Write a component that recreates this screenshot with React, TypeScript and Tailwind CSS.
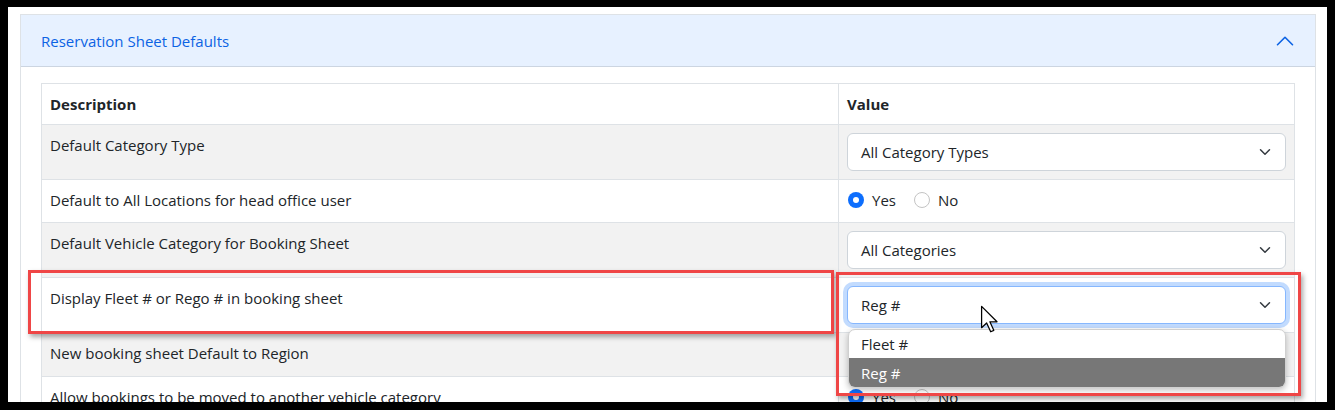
import { clsx } from 'clsx'

type Row = {
  label: string
  h: string
  striped: boolean
  kind: 'select' | 'radio' | 'hidden'
  value?: string
  yes?: boolean
  focus?: boolean
}

const rows: Row[] = [
  { label: 'Default Category Type', h: 'h-[55px]', striped: true, kind: 'select', value: 'All Category Types' },
  { label: 'Default to All Locations for head office user', h: 'h-[43px]', striped: false, kind: 'radio', yes: true },
  { label: 'Default Vehicle Category for Booking Sheet', h: 'h-[55px]', striped: true, kind: 'select', value: 'All Categories' },
  { label: 'Display Fleet # or Rego # in booking sheet', h: 'h-[55px]', striped: false, kind: 'select', value: 'Reg #', focus: true },
  // value cell sits under the open list, nothing of it shows
  { label: 'New booking sheet Default to Region', h: 'h-[44px]', striped: true, kind: 'hidden' },
  { label: 'Allow bookings to be moved to another vehicle category', h: 'h-[43px]', striped: false, kind: 'radio', yes: true },
]

function SelectBox({ value, focus }: { value: string; focus?: boolean }) {
  return (
    <div
      className={clsx(
        'flex h-[38px] items-center justify-between rounded-[6px] border bg-white pl-[13px] pr-[14px]',
        focus ? 'border-[#86b7fe] shadow-[0_0_0_4px_rgba(13,110,253,0.25)]' : 'border-[#ced4da]'
      )}
    >
      <span>{value}</span>
      <svg width="12" height="12" viewBox="0 0 16 16" fill="none">
        <path d="m2 5 6 6 6-6" stroke="#343a40" strokeWidth="2" strokeLinecap="round" strokeLinejoin="round" />
      </svg>
    </div>
  )
}

function Radio({ checked, label }: { checked: boolean; label: string }) {
  return (
    <label className="flex items-center gap-[8px]">
      {checked ? (
        <span className="flex h-4 w-4 items-center justify-center rounded-full bg-[#0d6efd]">
          <span className="h-[6px] w-[6px] rounded-full bg-white" />
        </span>
      ) : (
        <span className="h-4 w-4 rounded-full border border-[#c4c4c4] bg-white" />
      )}
      {label}
    </label>
  )
}

export default function App() {
  return (
    <div className="relative flex h-[410px] w-[1335px] flex-col overflow-hidden bg-black px-[8px] pt-[7px] pb-[8px] font-['Open_Sans',sans-serif] text-[15px] leading-6 text-[#212529]">
      {/* page */}
      <div className="flex-1 overflow-hidden bg-white pt-[7px] pl-[12px] pr-[11px]">
        <div className="border border-[#dee2e6]">
          {/* accordion header */}
          <div className="flex h-[52px] items-center justify-between border-b border-[#ccd5e1] bg-[#e7f1ff] px-5 text-[#0c63e4]">
            <span>Reservation Sheet Defaults</span>
            <svg width="20" height="20" viewBox="0 0 16 16" fill="none">
              <path d="M2 11 8 5l6 6" stroke="#0c63e4" strokeWidth="1.3" strokeLinecap="round" strokeLinejoin="round" />
            </svg>
          </div>

          {/* body */}
          <div className="px-5 pt-4">
            <div className="border-x border-[#dee2e6]">
              <div className="flex h-[41px] border-t border-[#dee2e6] bg-white font-bold">
                <div className="w-[796px] px-2 pt-2">Description</div>
                <div className="flex-1 border-l border-[#dee2e6] px-2 pt-2">Value</div>
              </div>
              {rows.map((row) => (
                <div
                  key={row.label}
                  className={clsx('flex border-t border-[#dee2e6]', row.h, row.striped ? 'bg-[#f2f2f2]' : 'bg-white')}
                >
                  <div className="w-[796px] px-2 pt-2 whitespace-nowrap">{row.label}</div>
                  <div className="flex-1 border-l border-[#dee2e6] px-2 pt-2">
                    {row.kind === 'select' && <SelectBox value={row.value ?? ''} focus={row.focus} />}
                    {row.kind === 'radio' && (
                      <div className="flex h-6 items-center gap-[18px] pl-px">
                        <Radio checked={!!row.yes} label="Yes" />
                        <Radio checked={!row.yes} label="No" />
                      </div>
                    )}
                  </div>
                </div>
              ))}
            </div>
          </div>
        </div>
      </div>

      {/* open dropdown list */}
      <div className="absolute left-[848px] top-[329px] w-[438px] overflow-hidden rounded-[7px] border border-[#d0d0d0] bg-white shadow-[0_2px_6px_rgba(0,0,0,0.25)]">
        <div className="flex h-[28px] items-center px-3">Fleet #</div>
        <div className="flex h-[29px] items-center bg-[#777777] px-3 text-white">Reg #</div>
      </div>

      {/* annotation boxes */}
      <div className="absolute left-[28px] top-[270px] h-[64px] w-[806px] border-[3px] border-[#ef4646] shadow-[2px_3px_5px_rgba(0,0,0,0.35)]" />
      <div className="absolute left-[836px] top-[272px] h-[124px] w-[465px] border-[3px] border-[#ef4646] shadow-[2px_3px_5px_rgba(0,0,0,0.35)]" />

      {/* mouse pointer */}
      <svg className="absolute left-[980px] top-[305px]" width="20" height="28" viewBox="0 0 14 20">
        <path d="M1 1v15.2l3.6-3.4 2.9 6.3 2.2-1-2.8-6.1h5.1Z" fill="#fff" stroke="#000" strokeWidth="0.9" strokeLinejoin="round" />
      </svg>
    </div>
  )
}
